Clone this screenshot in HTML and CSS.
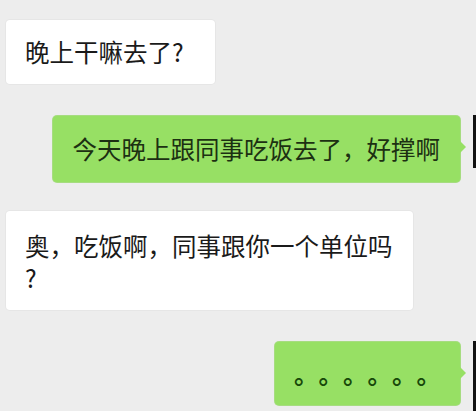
FILE: index.html
```html
<!DOCTYPE html>
<html lang="zh-CN">
<head>
<meta charset="utf-8">
<title>聊天</title>
<link rel="stylesheet" href="styles.css">
</head>
<body>
<div class="chat">
  <div class="row row-left">
    <div class="bubble bubble-white">晚上干嘛去了?</div>
  </div>
  <div class="row row-right">
    <div class="bubble bubble-green">今天晚上跟同事吃饭去了，好撑啊</div>
    <div class="avatar"></div>
  </div>
  <div class="row row-left row-tight">
    <div class="bubble bubble-white bubble-multi">奥，吃饭啊，同事跟你一个单位吗<br>?</div>
  </div>
  <div class="row row-right">
    <div class="bubble bubble-green bubble-dots">。。。。。。</div>
    <div class="avatar avatar-tall"></div>
  </div>
</div>
</body>
</html>
```

FILE: styles.css
```css
html, body {
  margin: 0;
  padding: 0;
}

body {
  width: 476px;
  height: 411px;
  overflow: hidden;
  background: #ededed;
  font-family: "Noto Sans CJK SC", "Noto Sans", sans-serif;
}

.chat {
  display: flex;
  flex-direction: column;
  gap: 32px;
  padding: 20px 0 0 6px;
  width: 470px;
  overflow: hidden;
}

.row {
  display: flex;
  align-items: flex-start;
}

.row-left {
  justify-content: flex-start;
}

.row-right {
  justify-content: flex-end;
  gap: 13px;
  margin-right: -50px;
}

.row-tight {
  margin-top: -3px;
}

.bubble {
  position: relative;
  font-size: 24.5px;
  font-weight: 400;
  line-height: 32px;
  border-radius: 4px;
  padding: 16px 31px 16px 19px;
  color: #1a1a1a;
  white-space: nowrap;
  text-spacing-trim: space-all;
}

.bubble-white {
  background: #ffffff;
  box-shadow: 0 0 0 1px #e6e6e6;
}

.bubble-multi {
  padding: 19px 20px 16px 19px;
}

.bubble-green {
  background: #97e064;
  color: #1c3012;
  padding: 17px 20px 17px 20px;
  box-shadow: 0 0 0 1px #a6dc80;
}

.bubble-green::after {
  content: "";
  position: absolute;
  right: -6px;
  top: 25px;
  border-style: solid;
  border-width: 6px 0 6px 6px;
  border-color: transparent transparent transparent #97e064;
}

.bubble-dots {
  color: #17480a;
  font-weight: 700;
  padding: 16px 19px 15px 19px;
}

.avatar {
  width: 53px;
  height: 53px;
  flex-shrink: 0;
  background: #121212;
  margin-top: -1px;
}

.avatar-tall {
  height: 70px;
}
```
